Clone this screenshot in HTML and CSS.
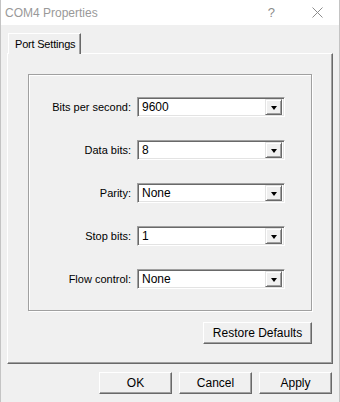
FILE: index.html
```html
<!DOCTYPE html>
<html lang="en">
<head>
    <meta charset="UTF-8">
    <meta name="viewport" content="width=device-width, initial-scale=1.0">
    <title>COM4 Properties</title>
    <link rel="stylesheet" href="styles.css">
</head>
<body>

    <div class="window">
        <div class="titlebar">
            <span class="title">COM4 Properties</span>
            <span class="help">?</span>
            <span class="close">
                <svg width="11" height="11" viewBox="0 0 11 11"><path d="M0.5 0.5 L10.5 10.5 M10.5 0.5 L0.5 10.5" stroke="#8c8c8c" stroke-width="1" fill="none"/></svg>
            </span>
        </div>

        <div class="content">
            <div class="tabs">
                <div class="tab">Port Settings</div>
            </div>

            <div class="tab-panel">
                <div class="group">
                    <label class="field-label">Bits per second:</label>
                    <div class="combo"><span>9600</span><i class="drop"></i></div>

                    <label class="field-label">Data bits:</label>
                    <div class="combo"><span>8</span><i class="drop"></i></div>

                    <label class="field-label">Parity:</label>
                    <div class="combo"><span>None</span><i class="drop"></i></div>

                    <label class="field-label">Stop bits:</label>
                    <div class="combo"><span>1</span><i class="drop"></i></div>

                    <label class="field-label">Flow control:</label>
                    <div class="combo"><span>None</span><i class="drop"></i></div>
                </div>

                <div class="restore-row">
                    <button class="btn btn-restore">Restore Defaults</button>
                </div>
            </div>

            <div class="dialog-buttons">
                <button class="btn">OK</button>
                <button class="btn">Cancel</button>
                <button class="btn">Apply</button>
            </div>
        </div>
    </div>

</body>
</html>
```

FILE: styles.css
```css
body {
    margin: 0;
    background-color: #f0f0f0;
    font-family: "Liberation Sans", Arial, sans-serif;
    font-size: 11px;
    color: #000;
}
.window {
    width: 340px;
    height: 402px;
    box-sizing: border-box;
    border-left: 1px solid #c4c4c4;
    border-right: 1px solid #c4c4c4;
    background-color: #f0f0f0;
    overflow: hidden;
}
.titlebar {
    height: 25px;
    background-color: #fff;
    display: flex;
    align-items: center;
    padding-left: 4px;
    color: #999;
    font-size: 12px;
}
.title {
    flex: 1;
}
.help {
    font-size: 13px;
    margin-right: 37px;
    color: #8c8c8c;
}
.close {
    display: flex;
    margin-right: 16px;
}
.content {
    padding: 8px 6px 0 6px;
}
.tabs {
    display: flex;
    height: 20px;
    padding-left: 1px;
}
.tab {
    padding: 4px 5px 0 6px;
    letter-spacing: -0.2px;
    border-top: 1px solid #fff;
    border-left: 1px solid #fff;
    border-right: 1px solid #696969;
    box-shadow: inset -1px 0 0 #a0a0a0;
    margin-bottom: -1px;
    background-color: #f0f0f0;
    position: relative;
    z-index: 1;
}
.tab-panel {
    height: 311px;
    box-sizing: border-box;
    border-top: 1px solid #fff;
    border-left: 1px solid #fff;
    border-right: 1px solid #696969;
    border-bottom: 1px solid #696969;
    box-shadow: inset -1px -1px 0 #a0a0a0;
    padding: 20px 20px 0 20px;
}
.group {
    border: 1px solid #a0a0a0;
    box-shadow: 1px 1px 0 #fff, inset 1px 1px 0 #fff;
    height: 237px;
    box-sizing: border-box;
    padding: 22px 0 0 0;
    display: grid;
    grid-template-columns: 102px 148px;
    column-gap: 6px;
    row-gap: 23px;
    align-content: start;
    align-items: center;
}
.field-label {
    text-align: right;
}
.combo {
    height: 20px;
    box-sizing: border-box;
    border: 1px solid;
    border-color: #a0a0a0 #fff #fff #a0a0a0;
    box-shadow: inset 1px 1px 0 #696969, inset -1px -1px 0 #e3e3e3;
    background-color: #fff;
    display: flex;
    align-items: center;
    padding: 0 2px 0 4px;
    font-size: 12px;
}
.combo span {
    flex: 1;
}
.drop {
    width: 17px;
    height: 16px;
    box-sizing: border-box;
    background-color: #f0f0f0;
    border-top: 1px solid #e3e3e3;
    border-left: 1px solid #e3e3e3;
    border-right: 1px solid #696969;
    border-bottom: 1px solid #696969;
    box-shadow: inset 1px 1px 0 #fff, inset -1px -1px 0 #a0a0a0;
    display: flex;
    align-items: center;
    justify-content: center;
}
.drop::after {
    content: "";
    border-left: 3.5px solid transparent;
    border-right: 3.5px solid transparent;
    border-top: 4px solid #000;
    margin-top: 1px;
}
.restore-row {
    display: flex;
    justify-content: flex-end;
    margin-top: 11px;
}
.btn {
    font-family: "Liberation Sans", Arial, sans-serif;
    font-size: 12px;
    color: #000;
    width: 73px;
    height: 22px;
    padding: 0;
    background-color: #f0f0f0;
    border-top: 1px solid #fff;
    border-left: 1px solid #fff;
    border-right: 1px solid #696969;
    border-bottom: 1px solid #696969;
    box-shadow: inset -1px -1px 0 #a0a0a0;
}
.btn-restore {
    width: 109px;
}
.dialog-buttons {
    display: flex;
    justify-content: flex-end;
    gap: 7px;
    margin-top: 8px;
    padding-right: 1px;
}
```
